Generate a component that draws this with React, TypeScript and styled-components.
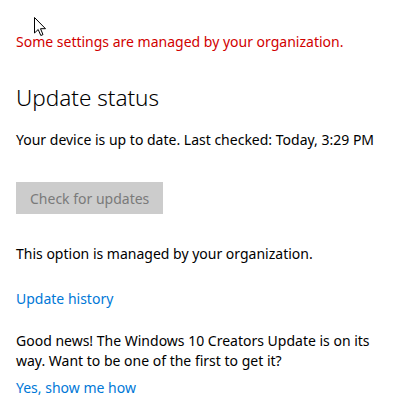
import React from "react";
import styled, { createGlobalStyle } from "styled-components";

const Global = createGlobalStyle`
  html, body { margin: 0; padding: 0; background: #ffffff; }
  body { font-family: "Noto Sans", "Open Sans", Arial, sans-serif; }
`;

const Page = styled.div`
  position: relative;
  width: 410px;
  height: 417px;
  box-sizing: border-box;
  padding: 32px 16px 0 16px;
  display: flex;
  flex-direction: column;
  align-items: flex-start;
  color: #000;
  font-size: 14px;
  line-height: 20px;
  overflow: hidden;
`;

const Warning = styled.div`
  color: #d10000;
  margin: 0;
`;

const Heading = styled.h1`
  margin: 31px 0 0 0;
  font-size: 22.5px;
  font-weight: 300;
  line-height: 30px;
  color: #000;
`;

const Text = styled.p<{ $top: number }>`
  margin: ${(p) => p.$top}px 0 0 0;
`;

const Button = styled.button`
  margin-top: 32px;
  height: 32px;
  padding: 0 14px;
  border: none;
  background: #cccccc;
  color: #7a7a7a;
  font-family: inherit;
  font-size: 14px;
  cursor: default;
`;

const Link = styled.a<{ $top: number }>`
  margin-top: ${(p) => p.$top}px;
  color: #0078d7;
  text-decoration: none;
`;

const Cursor = styled.svg`
  position: absolute;
  left: 34px;
  top: 17px;
`;

export default function App() {
  return (
    <>
      <Global />
      <Page>
        <Cursor width="13" height="20" viewBox="0 0 13 20">
          <path
            d="M0.5 0.5 L0.5 16 L4.2 12.5 L6.8 18.5 L9 17.6 L6.5 11.7 L11.5 11.7 Z"
            fill="#fff"
            stroke="#000"
            strokeWidth="1"
            strokeLinejoin="miter"
          />
        </Cursor>
        <Warning>Some settings are managed by your organization.</Warning>
        <Heading>Update status</Heading>
        <Text $top={17}>Your device is up to date. Last checked: Today, 3:29 PM</Text>
        <Button>Check for updates</Button>
        <Text $top={30}>This option is managed by your organization.</Text>
        <Link $top={25} href="#">Update history</Link>
        <Text $top={22}>
          Good news! The Windows 10 Creators Update is on its
          <br />
          way. Want to be one of the first to get it?
        </Text>
        <Link $top={7} href="#">Yes, show me how</Link>
      </Page>
    </>
  );
}
